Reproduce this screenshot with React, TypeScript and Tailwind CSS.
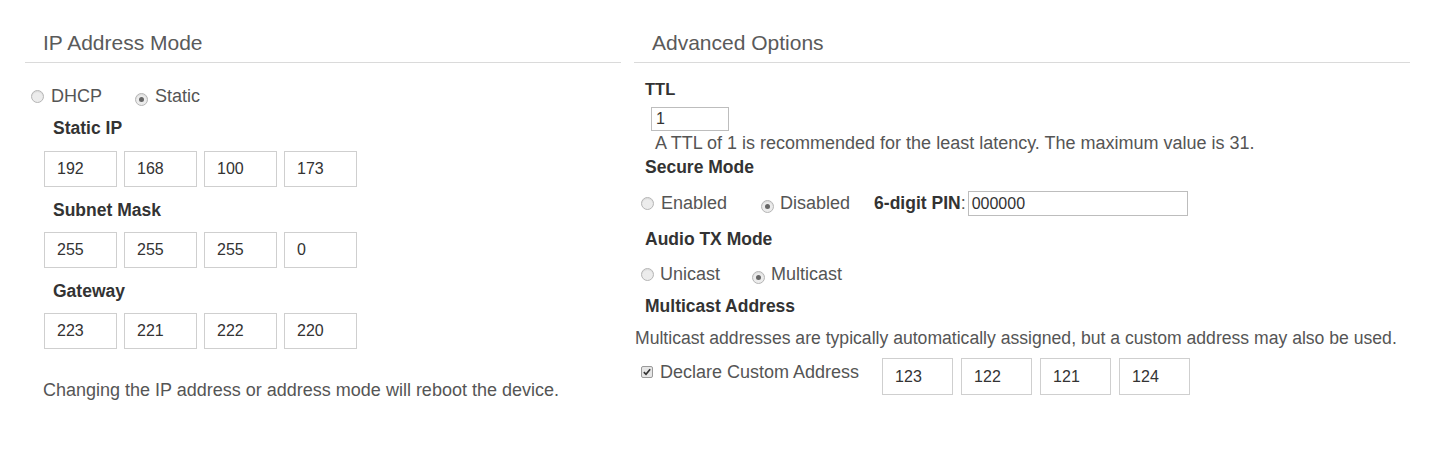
import React from "react";

const font = { fontFamily: '"Liberation Sans", Arial, sans-serif' };

function Radio({ checked }: { checked?: boolean }) {
  return (
    <span className="inline-flex h-[13px] w-[13px] shrink-0 items-center justify-center rounded-full border border-[#b5b5b5] bg-[#ececec] shadow-[inset_0_1px_1px_rgba(0,0,0,0.08)]">
      {checked && <span className="h-[5px] w-[5px] rounded-full bg-[#666]" />}
    </span>
  );
}

function Checkbox() {
  return (
    <span className="inline-flex h-[12px] w-[12px] shrink-0 items-center justify-center rounded-[2px] border border-[#9a9a9a] bg-[#e6e6e6]">
      <svg viewBox="0 0 12 12" className="h-[10px] w-[10px]">
        <path d="M2.2 6.2 L4.8 8.8 L9.8 2.6" fill="none" stroke="#333" strokeWidth="2" />
      </svg>
    </span>
  );
}

function Box({ v, w = "w-[73px]", h = "h-[36px]" }: { v: string; w?: string; h?: string }) {
  return (
    <div className={`${w} ${h} flex items-center border border-[#cfcfcf] bg-white pl-[12px] text-[16px] text-[#333]`}>
      {v}
    </div>
  );
}

function IpRow({ vals }: { vals: string[] }) {
  return (
    <div className="flex gap-[7px]">
      {vals.map((v, i) => (
        <Box key={i} v={v} />
      ))}
    </div>
  );
}

function Heading({ children }: { children: React.ReactNode }) {
  return (
    <div className="border-b border-[#dadada] pl-[18px] pt-[31px] pb-[7px] text-[21px] leading-[24px] text-[#5a5a5a]">
      {children}
    </div>
  );
}

export default function App() {
  return (
    <div className="flex w-[1433px] h-[459px] bg-white pl-[25px]" style={font}>
      {/* Left column */}
      <div className="w-[596px] shrink-0">
        <Heading>IP Address Mode</Heading>
        <div className="mt-[23px] flex h-[20px] items-center pl-[6px] text-[18px] text-[#555]">
          <Radio />
          <span className="ml-[7px]">DHCP</span>
          <span className="ml-[33px]"><Radio checked /></span>
          <span className="ml-[7px]">Static</span>
        </div>
        <div className="mt-[12px] pl-[28px] text-[17.5px] font-bold leading-[20px] text-[#333]">Static IP</div>
        <div className="mt-[13px] pl-[19px]">
          <IpRow vals={["192", "168", "100", "173"]} />
        </div>
        <div className="mt-[13px] pl-[28px] text-[17.5px] font-bold leading-[20px] text-[#333]">Subnet Mask</div>
        <div className="mt-[12px] pl-[19px]">
          <IpRow vals={["255", "255", "255", "0"]} />
        </div>
        <div className="mt-[13px] pl-[28px] text-[17.5px] font-bold leading-[20px] text-[#333]">Gateway</div>
        <div className="mt-[12px] pl-[19px]">
          <IpRow vals={["223", "221", "222", "220"]} />
        </div>
        <div className="mt-[31px] pl-[18px] text-[18px] leading-[20px] text-[#555]">
          Changing the IP address or address mode will reboot the device.
        </div>
      </div>

      {/* Right column */}
      <div className="ml-[13px] w-[776px] shrink-0">
        <Heading>Advanced Options</Heading>
        <div className="mt-[16px] pl-[11px] text-[16.5px] font-bold leading-[20px] text-[#333]">TTL</div>
        <div className="mt-[8px] pl-[17px]">
          <div className="flex h-[24px] w-[78px] items-center border border-[#bdbdbd] bg-white pl-[4px] text-[16px] text-[#333]">1</div>
        </div>
        <div className="mt-[2px] pl-[21px] text-[18px] leading-[20px] text-[#555]">
          A TTL of 1 is recommended for the least latency. The maximum value is 31.
        </div>
        <div className="mt-[4px] pl-[11px] text-[17.5px] font-bold leading-[20px] text-[#333]">Secure Mode</div>
        <div className="mt-[14px] flex h-[25px] items-center pl-[7px] text-[18px] text-[#555]">
          <Radio />
          <span className="ml-[7px]">Enabled</span>
          <span className="ml-[34px]"><Radio checked /></span>
          <span className="ml-[6px]">Disabled</span>
          <span className="ml-[24px] text-[17.5px] font-bold text-[#333]">6-digit PIN</span>
          <span>:</span>
          <div className="ml-[2px] flex h-[25px] w-[220px] items-center border border-[#bdbdbd] bg-white pl-[3px] text-[16px] text-[#333]">000000</div>
        </div>
        <div className="mt-[13px] pl-[11px] text-[17.5px] font-bold leading-[20px] text-[#333]">Audio TX Mode</div>
        <div className="mt-[15px] flex h-[20px] items-center pl-[7px] text-[18px] text-[#555]">
          <Radio />
          <span className="ml-[6px]">Unicast</span>
          <span className="ml-[32px]"><Radio checked /></span>
          <span className="ml-[6px]">Multicast</span>
        </div>
        <div className="mt-[12px] pl-[11px] text-[17.5px] font-bold leading-[20px] text-[#333]">Multicast Address</div>
        <div className="mt-[12px] whitespace-nowrap pl-[1px] text-[17.6px] leading-[20px] text-[#555]">
          Multicast addresses are typically automatically assigned, but a custom address may also be used.
        </div>
        <div className="mt-[10px] flex items-start pl-[7px]">
          <div className="mt-[4px] flex h-[20px] items-center text-[18px] text-[#555]">
            <Checkbox />
            <span className="ml-[7px]">Declare Custom Address</span>
          </div>
          <div className="ml-[23px] flex gap-[8px]">
            <Box v="123" w="w-[71px]" h="h-[37px]" />
            <Box v="122" w="w-[71px]" h="h-[37px]" />
            <Box v="121" w="w-[71px]" h="h-[37px]" />
            <Box v="124" w="w-[71px]" h="h-[37px]" />
          </div>
        </div>
      </div>
    </div>
  );
}
